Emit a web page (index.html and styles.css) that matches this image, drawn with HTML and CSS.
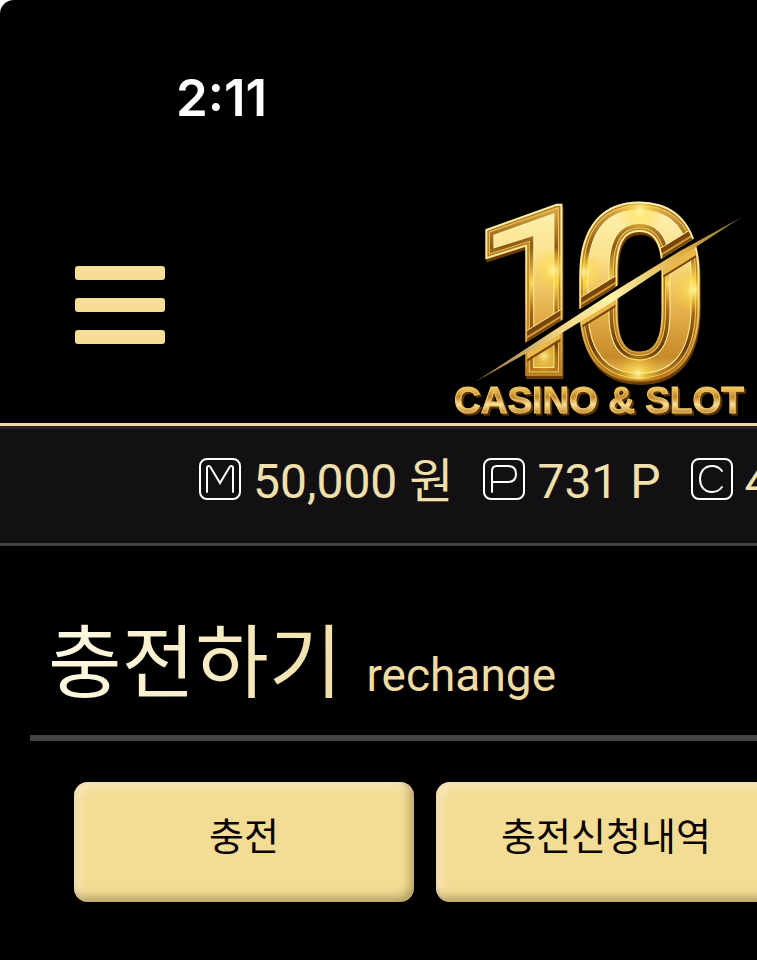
FILE: index.html
```html
<!DOCTYPE html>
<html lang="ko">
<head>
    <meta charset="UTF-8">
    <meta name="viewport" content="width=device-width, initial-scale=1.0">
    <title>충전하기</title>
    <link rel="stylesheet" href="styles.css">
</head>
<body>
    <div class="screen">
        <div class="status-bar">2:11</div>

        <header class="header">
            <button type="button" class="menu-btn" aria-label="메뉴">
                <span></span>
                <span></span>
                <span></span>
            </button>
            <a href="#" class="logo" aria-label="10 Casino &amp; Slot">
                <svg viewBox="0 0 300 233" width="300" height="233">
                    <defs>
                        <linearGradient id="face" x1="0" y1="10" x2="0" y2="195" gradientUnits="userSpaceOnUse">
                            <stop offset="0" stop-color="#fff3b8"/>
                            <stop offset="0.3" stop-color="#fbe28c"/>
                            <stop offset="0.6" stop-color="#e5b04a"/>
                            <stop offset="0.85" stop-color="#c68a28"/>
                            <stop offset="1" stop-color="#ffe37a"/>
                        </linearGradient>
                        <linearGradient id="bevel" x1="0" y1="10" x2="0" y2="195" gradientUnits="userSpaceOnUse">
                            <stop offset="0" stop-color="#e9bd55"/>
                            <stop offset="0.25" stop-color="#8e5a12"/>
                            <stop offset="0.45" stop-color="#ffd94e"/>
                            <stop offset="0.6" stop-color="#a86a12"/>
                            <stop offset="0.8" stop-color="#6b3a06"/>
                            <stop offset="1" stop-color="#e6a82c"/>
                        </linearGradient>
                        <linearGradient id="rim" x1="0" y1="10" x2="0" y2="195" gradientUnits="userSpaceOnUse">
                            <stop offset="0" stop-color="#fff0b0"/>
                            <stop offset="0.5" stop-color="#ffe278"/>
                            <stop offset="1" stop-color="#b87518"/>
                        </linearGradient>
                        <linearGradient id="slash" x1="25" y1="192" x2="292" y2="27" gradientUnits="userSpaceOnUse">
                            <stop offset="0" stop-color="#8a6a3a"/>
                            <stop offset="0.3" stop-color="#f0cf7c"/>
                            <stop offset="0.5" stop-color="#fff3a8"/>
                            <stop offset="0.8" stop-color="#d9a840"/>
                            <stop offset="1" stop-color="#7b6538"/>
                        </linearGradient>
                        <linearGradient id="word" x1="0" y1="195" x2="0" y2="225" gradientUnits="userSpaceOnUse">
                            <stop offset="0" stop-color="#ffe07a"/>
                            <stop offset="0.4" stop-color="#c08426"/>
                            <stop offset="0.65" stop-color="#f8e2a0"/>
                            <stop offset="1" stop-color="#b5741c"/>
                        </linearGradient>
                        <radialGradient id="glow">
                            <stop offset="0" stop-color="#fff6a8" stop-opacity="0.9"/>
                            <stop offset="0.4" stop-color="#ffe14e" stop-opacity="0.5"/>
                            <stop offset="1" stop-color="#ffc61e" stop-opacity="0"/>
                        </radialGradient>
                        <clipPath id="digits">
                            <text class="digit" x="18" y="184" font-size="236">1</text>
                            <text class="digit" x="120" y="188" font-size="242">0</text>
                        </clipPath>
                        <clipPath id="upper"><path d="M0 0H300V14L0 199Z"/></clipPath>
                        <clipPath id="lower"><path d="M0 208L300 23V233H0Z"/></clipPath>
                        <g id="ten">
                            <g class="digit-rim">
                                <text class="digit" x="18" y="184" font-size="236">1</text>
                                <text class="digit" x="120" y="188" font-size="242">0</text>
                            </g>
                            <g clip-path="url(#digits)">
                                <path d="M0 0H300V233H0Z" fill="url(#face)"/>
                                <g class="digit-bevel">
                                    <text class="digit b1" x="18" y="184" font-size="236">1</text>
                                    <text class="digit b1" x="120" y="188" font-size="242">0</text>
                                    <text class="digit b2" x="18" y="184" font-size="236">1</text>
                                    <text class="digit b2" x="120" y="188" font-size="242">0</text>
                                    <text class="digit b3" x="18" y="184" font-size="236">1</text>
                                    <text class="digit b3" x="120" y="188" font-size="242">0</text>
                                    <text class="digit b4" x="18" y="184" font-size="236">1</text>
                                    <text class="digit b4" x="120" y="188" font-size="242">0</text>
                                </g>
                                <circle cx="104" cy="80" r="22" fill="url(#glow)"/>
                                <circle cx="94" cy="166" r="17" fill="url(#glow)"/>
                                <circle cx="134" cy="82" r="20" fill="url(#glow)"/>
                                <circle cx="190" cy="20" r="24" fill="url(#glow)"/>
                                <circle cx="244" cy="100" r="24" fill="url(#glow)"/>
                                <circle cx="188" cy="184" r="22" fill="url(#glow)"/>
                            </g>
                        </g>
                    </defs>
                    <g clip-path="url(#upper)">
                        <use href="#ten"/>
                        <g clip-path="url(#digits)" fill="none">
                            <path d="M0 194L300 9" stroke="#7a4508" stroke-width="10"/>
                            <path d="M0 188L300 3" stroke="#ffe99a" stroke-width="1"/>
                            <path d="M0 195L300 10" stroke="#d09a3a" stroke-width="2"/>
                        </g>
                    </g>
                    <g clip-path="url(#lower)">
                        <use href="#ten"/>
                        <g clip-path="url(#digits)" fill="none">
                            <path d="M0 212L300 27" stroke="#e8b84a" stroke-width="8"/>
                            <path d="M0 218L300 33" stroke="#7a4508" stroke-width="2"/>
                        </g>
                    </g>
                    <path d="M25 192L100 143L160 104L230 61L292 27L232 66L164 111L102 149Z" fill="url(#slash)"/>
                    <text class="logo-word" x="4" y="223">CASINO &amp; SLOT</text>
                </svg>
            </a>
        </header>

        <ul class="wallet">
            <li>
                <svg class="wallet-icon" viewBox="0 0 42 42">
                    <rect x="1" y="1" width="40" height="40" rx="7"/>
                    <path d="M8 34V10Q8 8 10 8Q11 8 12 10L21 25L30 10Q31 8 32 8Q34 8 34 10V34"/>
                </svg>
                <span>50,000 원</span>
            </li>
            <li>
                <svg class="wallet-icon" viewBox="0 0 42 42">
                    <rect x="1" y="1" width="40" height="40" rx="7"/>
                    <path d="M9 34V13Q9 8 14 8H25Q33 8 33 16T25 24H9"/>
                </svg>
                <span>731 P</span>
            </li>
            <li>
                <svg class="wallet-icon" viewBox="0 0 42 42">
                    <rect x="1" y="1" width="40" height="40" rx="7"/>
                    <path d="M31 13C28 9 25 8 21 8C13 8 9 14 9 21S13 34 21 34C25 34 28 33 31 29"/>
                </svg>
                <span>4</span>
            </li>
        </ul>

        <main class="content">
            <h1 class="page-title"><span>충전하기</span> <small>rechange</small></h1>
            <div class="tabs">
                <button type="button">충전</button>
                <button type="button">충전신청내역</button>
            </div>
        </main>
    </div>
</body>
</html>
```
FILE: styles.css
```css
:root {
    --bg-color: #000;
    --bar-bg-color: #121013;
    --gold: #f3dd95;
    --gold-light: #f1e0ab;
    --line-color: #444244;
}

* {
    box-sizing: border-box;
}

html {
    background-color: #fff;
}

body {
    margin: 0;
    font-family: Roboto, "Noto Sans CJK KR", sans-serif;
    color: var(--gold-light);
}

.screen {
    min-height: 100vh;
    background-color: var(--bg-color);
    border-top-left-radius: 14px;
    overflow: hidden;
}

.status-bar {
    padding: 68px 0 0 176px;
    font-family: Inter, sans-serif;
    font-size: 51px;
    font-weight: 600;
    line-height: 60px;
    color: #fff;
}

/* Header */
.header {
    display: flex;
    justify-content: space-between;
    align-items: flex-start;
    margin-top: 62px;
    padding: 0 7px 0 75px;
    border-bottom: 3px solid #f0d9a8;
}

.menu-btn {
    display: flex;
    flex-direction: column;
    gap: 18px;
    width: 90px;
    margin-top: 76px;
    padding: 0;
    background: none;
    border: none;
    cursor: pointer;
}

.menu-btn span {
    width: 100%;
    height: 14px;
    background-color: #f6df95;
    border-radius: 3px;
}

.logo svg {
    display: block;
}

.digit {
    font-family: Roboto, sans-serif;
    font-weight: 700;
}

.digit-rim {
    fill: url(#rim);
    stroke: url(#rim);
    stroke-width: 4;
    filter: drop-shadow(1px 3px 0 #6b3c08);
}

.digit-bevel {
    fill: none;
}

.b1 {
    stroke: #fff0a8;
    stroke-width: 14;
}

.b2 {
    stroke: url(#bevel);
    stroke-width: 12;
}

.b3 {
    stroke: #f2c85c;
    stroke-width: 5;
}

.b4 {
    stroke: #b07a22;
    stroke-width: 3;
}

.logo-word {
    font-family: "Liberation Sans", sans-serif;
    font-size: 37px;
    font-weight: 700;
    fill: url(#word);
    stroke: #f2c45a;
    stroke-width: 1;
    filter: drop-shadow(2px 2px 0 #5e3508);
}

/* Wallet bar */
.wallet {
    display: flex;
    gap: 30px;
    margin: 0;
    padding: 26px 0 34px 199px;
    list-style: none;
    background-color: var(--bar-bg-color);
    border-top: 3px solid #242623;
    border-bottom: 3px solid var(--line-color);
    font-size: 48px;
    line-height: 54px;
    white-space: nowrap;
}

.wallet li {
    display: flex;
    flex: none;
    align-items: center;
    gap: 12px;
}

.wallet-icon {
    width: 42px;
    height: 42px;
    margin-bottom: 6px;
    fill: none;
    stroke: #fff;
    stroke-width: 2;
    stroke-linecap: round;
}

/* Content */
.content {
    padding: 68px 0 58px 30px;
}

.page-title {
    display: flex;
    align-items: baseline;
    gap: 24px;
    margin: 0;
    padding: 0 18px 10px;
    border-bottom: 6px solid var(--line-color);
    font-size: 80px;
    font-weight: 400;
    line-height: 100px;
    white-space: nowrap;
}

.page-title span {
    background: linear-gradient(100deg, #fffbe6, #f1dfa6);
    -webkit-background-clip: text;
    background-clip: text;
    color: transparent;
}

.page-title small {
    font-size: 46px;
    color: #f0dca2;
}

.tabs {
    display: flex;
    gap: 22px;
    padding: 41px 0 0 44px;
}

.tabs button {
    flex: none;
    width: 340px;
    height: 120px;
    padding: 0 0 18px;
    background-color: var(--gold);
    border: none;
    border-radius: 14px;
    box-shadow: inset -4px -5px 10px rgba(90, 70, 20, 0.4), inset 5px 5px 10px rgba(255, 240, 215, 0.6);
    font-family: inherit;
    font-size: 38px;
    color: #0a0404;
    cursor: pointer;
}
```
